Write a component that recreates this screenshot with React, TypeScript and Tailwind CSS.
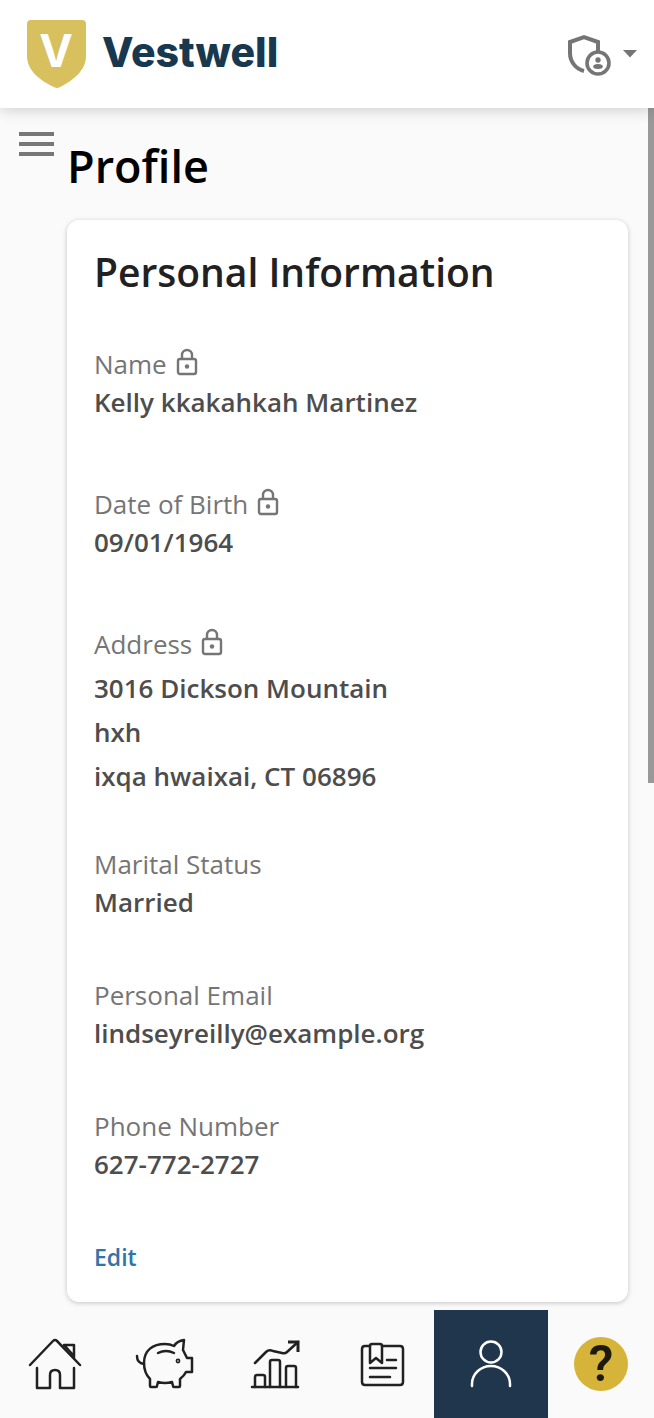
import type { ReactNode } from "react";

type Field = {
  label: string;
  lines: string[];
  locked?: boolean;
  spacing: string;
};

const fields: Field[] = [
  { label: "Name", lines: ["Kelly kkakahkah Martinez"], locked: true, spacing: "mb-16" },
  { label: "Date of Birth", lines: ["09/01/1964"], locked: true, spacing: "mb-16" },
  {
    label: "Address",
    lines: ["3016 Dickson Mountain", "hxh", "ixqa hwaixai, CT 06896"],
    locked: true,
    spacing: "mb-12",
  },
  { label: "Marital Status", lines: ["Married"], spacing: "mb-[55px]" },
  { label: "Personal Email", lines: ["lindseyreilly@example.org"], spacing: "mb-[55px]" },
  { label: "Phone Number", lines: ["627-772-2727"], spacing: "mb-[55px]" },
];

const LockIcon = () => (
  <svg viewBox="0 0 24 28" className="w-6 h-7 mb-1" fill="none" stroke="#757575" strokeWidth="2.4">
    <rect x="3" y="11" width="18" height="15" rx="2" />
    <path d="M7 11V7a5 5 0 0 1 10 0v4" />
    <circle cx="12" cy="18.5" r="2.2" fill="#757575" stroke="none" />
  </svg>
);

const NavIcon = ({ children, viewBox = "0 0 56 56" }: { children: ReactNode; viewBox?: string }) => (
  <svg
    viewBox={viewBox}
    className="w-14 h-14 overflow-visible"
    fill="none"
    stroke="currentColor"
    strokeWidth="2.5"
    strokeLinecap="round"
    strokeLinejoin="round"
    aria-hidden="true"
  >
    {children}
  </svg>
);

const navItems = [
  {
    label: "Home",
    icon: (
      <NavIcon viewBox="-1 0 56 56">
        <path d="M3 29 26 5q2-2 4 0l23 24" />
        <path d="M37 9h10v13M38 10l8 9" />
        <path d="M10 32v20h13V39q0-5 5-5t5 5v13h14V32" />
      </NavIcon>
    ),
  },
  {
    label: "Savings",
    icon: (
      <NavIcon viewBox="-1 0 56 56">
        <path d="M1 20q0 7 7 8" />
        <path d="M8 27C8 14 17 8 29 8q5 0 9 2 3-5 10-6l-1 10 4 8h5v14h-6q-2 4-6 7v7q0 1-1 1h-5q-1 0-1-1l-1-4q-7 2-14 0l-1 4q0 1-1 1h-5q-1 0-1-1v-7Q8 37 8 27Z" />
        <path d="M22 17q8-4 16 0" />
        <circle cx="42" cy="25" r="1.6" strokeWidth="1.6" />
      </NavIcon>
    ),
  },
  {
    label: "Investments",
    icon: (
      <NavIcon viewBox="-4 0 56 56">
        <path d="M5 51h46" />
        <path d="M8 51V41q0-2 2-2h6q2 0 2 2v10M23 51V26q0-2 2-2h6q2 0 2 2v25M39 51V32q0-2 2-2h6q2 0 2 2v19" />
        <path d="M8 27 19 16q3-3 7-1l9 2q3 1 5-1L51 6" />
        <path d="M41 6h10v10" strokeLinejoin="miter" strokeLinecap="butt" strokeWidth="3" />
      </NavIcon>
    ),
  },
  {
    label: "Documents",
    icon: (
      <NavIcon viewBox="-2 0 56 56">
        <path d="M16 10h-5q-3 0-3 3v33q0 3 3 3h35q3 0 3-3V13q0-3-3-3H28" />
        <path d="M16 27V10q0-2 2-2h8q2 0 2 2v17l-6-5Z" />
        <path d="M33 24h9M16 32h26M16 41h20" />
      </NavIcon>
    ),
  },
  {
    label: "Profile",
    active: true,
    icon: (
      <NavIcon>
        <circle cx="28" cy="16" r="10.5" />
        <path d="M9 50v-2a19 18 0 0 1 38 0v2" />
      </NavIcon>
    ),
  },
  {
    label: "Help",
    icon: (
      <span className="w-[54px] h-[54px] rounded-full bg-[#d6b43a] flex items-center justify-center font-['Roboto',sans-serif] text-[50px] leading-[54px] font-semibold text-[#1d190b]">
        ?
      </span>
    ),
  },
];

const Header = () => (
  <header className="relative z-10 flex items-center justify-between bg-white pl-[27px] pr-[17px] py-5 shadow-[0_2px_14px_rgba(0,0,0,0.18)]">
    <a href="#home" className="flex items-center gap-4">
      <svg viewBox="0 0 59 68" className="w-[59px] h-[68px]" role="img" aria-label="Vestwell shield">
        <path d="M4 0h51q4 0 4 4v32c0 14-12 24-26 31q-3 2-6 0C12 60 0 50 0 36V4q0-4 4-4Z" fill="#d7c05d" />
        <text x="29" y="47" textAnchor="middle" fill="#fff" fontFamily="Inter, sans-serif" fontWeight="700" fontSize="45">
          V
        </text>
      </svg>
      <span className="pb-1 font-['Inter',sans-serif] text-[41px] leading-[60px] font-extrabold text-[#17384f]">
        Vestwell
      </span>
    </a>
    <button type="button" aria-label="Account menu" className="flex items-center gap-3">
      <svg viewBox="0 0 44 44" className="w-11 h-11" fill="none" stroke="#757575" strokeWidth="4">
        <path d="M31 21V10L17 5 3 10v11c0 9 6 16 14 18" />
        <circle cx="31" cy="31" r="11" fill="#fff" strokeWidth="3.6" />
        <circle cx="31" cy="28" r="2.7" fill="#757575" stroke="none" />
        <ellipse cx="31" cy="34.5" rx="4.8" ry="2.5" fill="#757575" stroke="none" />
      </svg>
      <svg viewBox="0 0 14 8" className="w-[14px] h-2" fill="#757575">
        <path d="M0 0h14L7 7.5Z" />
      </svg>
    </button>
  </header>
);

const ProfileField = ({ field }: { field: Field }) => {
  const multiline = field.lines.length > 1;

  return (
    <div className={field.spacing}>
      <dt className="flex items-center gap-2 h-9 text-[26px] text-[#757575]">
        {field.label}
        {field.locked && <LockIcon />}
      </dt>
      <dd className={multiline ? "mt-1 leading-[44px]" : "leading-10"}>
        {field.lines.map((line) => (
          <span key={line} className="block text-[26px] font-semibold text-[#4d4d4d]">
            {line}
          </span>
        ))}
      </dd>
    </div>
  );
};

const navItemClass = (label: string) => {
  if (label === "Profile") return "w-[114px] flex items-center justify-center bg-[#20364d] text-white";
  if (label === "Help") return "w-[106px] flex items-center justify-center";
  return "flex-1 flex items-center justify-center text-[#212121]";
};

const BottomNav = () => (
  <nav className="flex h-[108px]">
    {navItems.map((item) => (
      <a
        key={item.label}
        href={`#${item.label.toLowerCase()}`}
        aria-label={item.label}
        aria-current={item.active ? "page" : undefined}
        className={navItemClass(item.label)}
      >
        {item.icon}
      </a>
    ))}
  </nav>
);

export default function App() {
  return (
    <div className="relative min-h-screen flex flex-col bg-[#fafafa] font-['Open_Sans',sans-serif]">
      <Header />

      <main className="flex-1 flex pr-[26px] pb-2">
        <div className="w-[67px] shrink-0 pt-6 pl-[19px]">
          <button type="button" aria-label="Open menu" className="flex flex-col gap-[6px]">
            <span className="block w-[35px] h-1 bg-[#777]" />
            <span className="block w-[35px] h-1 bg-[#777]" />
            <span className="block w-[35px] h-1 bg-[#777]" />
          </button>
        </div>

        <div className="flex-1 min-w-0">
          <h1 className="pt-7 pb-6 text-[45px] leading-[60px] font-semibold text-black">Profile</h1>
          <section className="bg-white rounded-xl px-[27px] pt-6 pb-[27px] shadow-[0_1px_5px_rgba(0,0,0,0.22)]">
            <h2 className="mb-[46px] text-[39px] leading-[56px] font-semibold text-[#212121]">Personal Information</h2>
            <dl>
              {fields.map((field) => (
                <ProfileField key={field.label} field={field} />
              ))}
            </dl>
            <button type="button" className="block text-[23px] leading-9 font-semibold text-[#3273a8]">
              Edit
            </button>
          </section>
        </div>
      </main>

      <BottomNav />

      {/* Scroll thumb */}
      <div className="absolute right-0 top-[108px] w-[6px] h-[675px] bg-[#999]" />
    </div>
  );
}
